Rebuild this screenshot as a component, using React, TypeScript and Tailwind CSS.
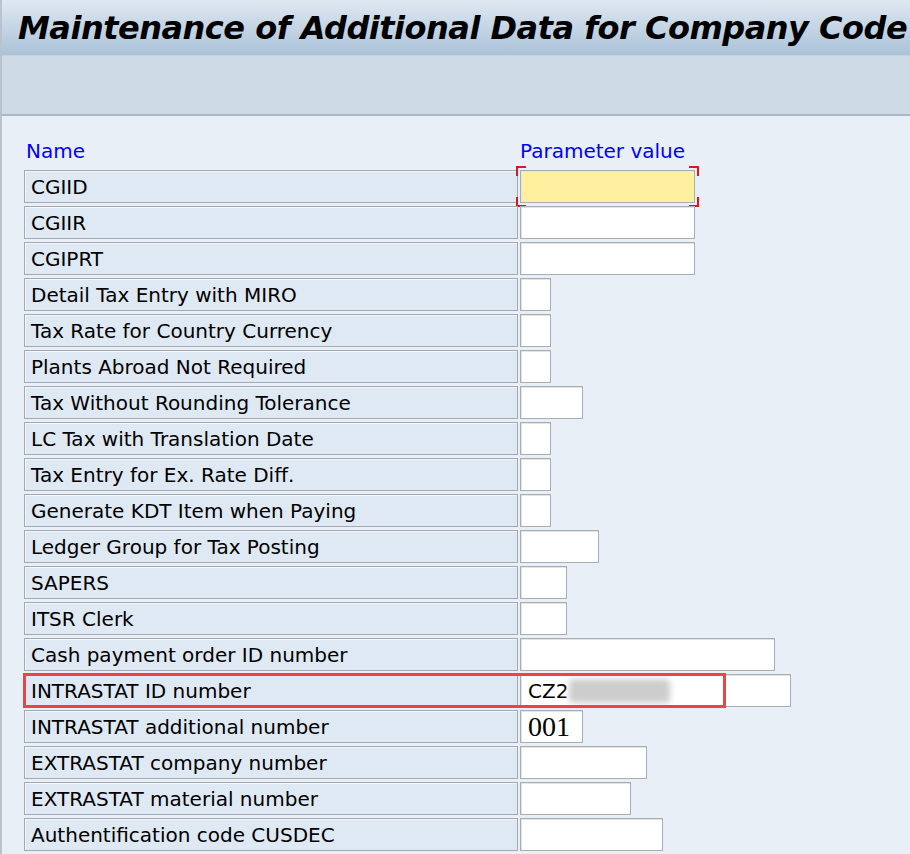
import React from "react";

type Row = { label: string; width: number; value?: string; kind?: "focus" | "intrastat" | "serif" };

const rows: Row[] = [
  { label: "CGIID", width: 175, kind: "focus" },
  { label: "CGIIR", width: 175 },
  { label: "CGIPRT", width: 175 },
  { label: "Detail Tax Entry with MIRO", width: 31 },
  { label: "Tax Rate for Country Currency", width: 31 },
  { label: "Plants Abroad Not Required", width: 31 },
  { label: "Tax Without Rounding Tolerance", width: 63 },
  { label: "LC Tax with Translation Date", width: 31 },
  { label: "Tax Entry for Ex. Rate Diff.", width: 31 },
  { label: "Generate KDT Item when Paying", width: 31 },
  { label: "Ledger Group for Tax Posting", width: 79 },
  { label: "SAPERS", width: 47 },
  { label: "ITSR Clerk", width: 47 },
  { label: "Cash payment order ID number", width: 255 },
  { label: "INTRASTAT ID number", width: 271, value: "CZ2", kind: "intrastat" },
  { label: "INTRASTAT additional number", width: 63, value: "001", kind: "serif" },
  { label: "EXTRASTAT company number", width: 127 },
  { label: "EXTRASTAT material number", width: 111 },
  { label: "Authentification code CUSDEC", width: 143 },
];

const font = { fontFamily: "Tahoma, 'DejaVu Sans', sans-serif" };

function ValueField({ row }: { row: Row }) {
  const base =
    "h-[33px] border border-[#a9adb1] shadow-[inset_1px_1px_0_#e4e4e4] flex items-center px-[7px] text-[20px] text-black";
  if (row.kind === "focus") {
    return (
      <div className="relative">
        <div className={`${base} bg-[#fff0a0]`} style={{ width: row.width }} />
        <span className="absolute -left-[4px] -top-[4px] w-[10px] h-[10px] border-l-2 border-t-2 border-[#e0141e]" />
        <span className="absolute -right-[4px] -top-[4px] w-[10px] h-[10px] border-r-2 border-t-2 border-[#e0141e]" />
        <span className="absolute -left-[4px] -bottom-[4px] w-[10px] h-[10px] border-l-2 border-b-2 border-[#e0141e]" />
        <span className="absolute -right-[4px] -bottom-[4px] w-[10px] h-[10px] border-r-2 border-b-2 border-[#e0141e]" />
      </div>
    );
  }
  if (row.kind === "serif") {
    return (
      <div className={`${base} bg-white`} style={{ width: row.width }}>
        <span className="text-[28px] leading-none" style={{ fontFamily: "'Liberation Serif', serif" }}>
          {row.value}
        </span>
      </div>
    );
  }
  return (
    <div className={`${base} bg-white`} style={{ width: row.width }}>
      {row.value}
      {row.kind === "intrastat" && (
        <span className="ml-[1px] w-[101px] h-[24px] bg-[#cdcdcd] blur-[3px] rounded-sm" />
      )}
    </div>
  );
}

export default function App() {
  return (
    <div className="w-[910px] h-[854px] overflow-hidden bg-[#e9eff7] border-l-2 border-[#b9c3cd]" style={font}>
      {/* title */}
      <div className="h-[56px] bg-gradient-to-b from-[#dfe8f1] to-[#abc2d8] border-b border-[#c3d0dd] flex items-center pl-[16px]">
        <h1 className="text-[32px] font-bold italic text-black whitespace-nowrap tracking-[-0.5px]">
          Maintenance of Additional Data for Company Code
        </h1>
      </div>
      {/* toolbar */}
      <div className="h-[60px] bg-[#cedbe7] border-b-2 border-[#a8b7c6]" />

      <div className="pl-[22px] pt-[20px]">
        <div className="flex h-[30px] items-end text-[20px] text-[#0000ff] leading-none pb-[5px]">
          <span className="w-[494px] pl-[2px]">Name</span>
          <span className="pl-[2px]">Parameter value</span>
        </div>
        <div className="flex flex-col gap-[3px] mt-[4px]">
          {rows.map((row) => (
            <div key={row.label} className="relative flex gap-[2px]">
              <div className="w-[494px] h-[33px] bg-[#dee9f4] border border-[#a4aab0] shadow-[inset_1px_1px_0_#f2f6fa] flex items-center pl-[6px] text-[20px] text-black whitespace-nowrap">
                {row.label}
              </div>
              <ValueField row={row} />
              {row.kind === "intrastat" && (
                <div className="absolute -left-[1px] -top-[1px] w-[703px] h-[35px] border-[3px] border-[#e4474a]" />
              )}
            </div>
          ))}
        </div>
      </div>
    </div>
  );
}
